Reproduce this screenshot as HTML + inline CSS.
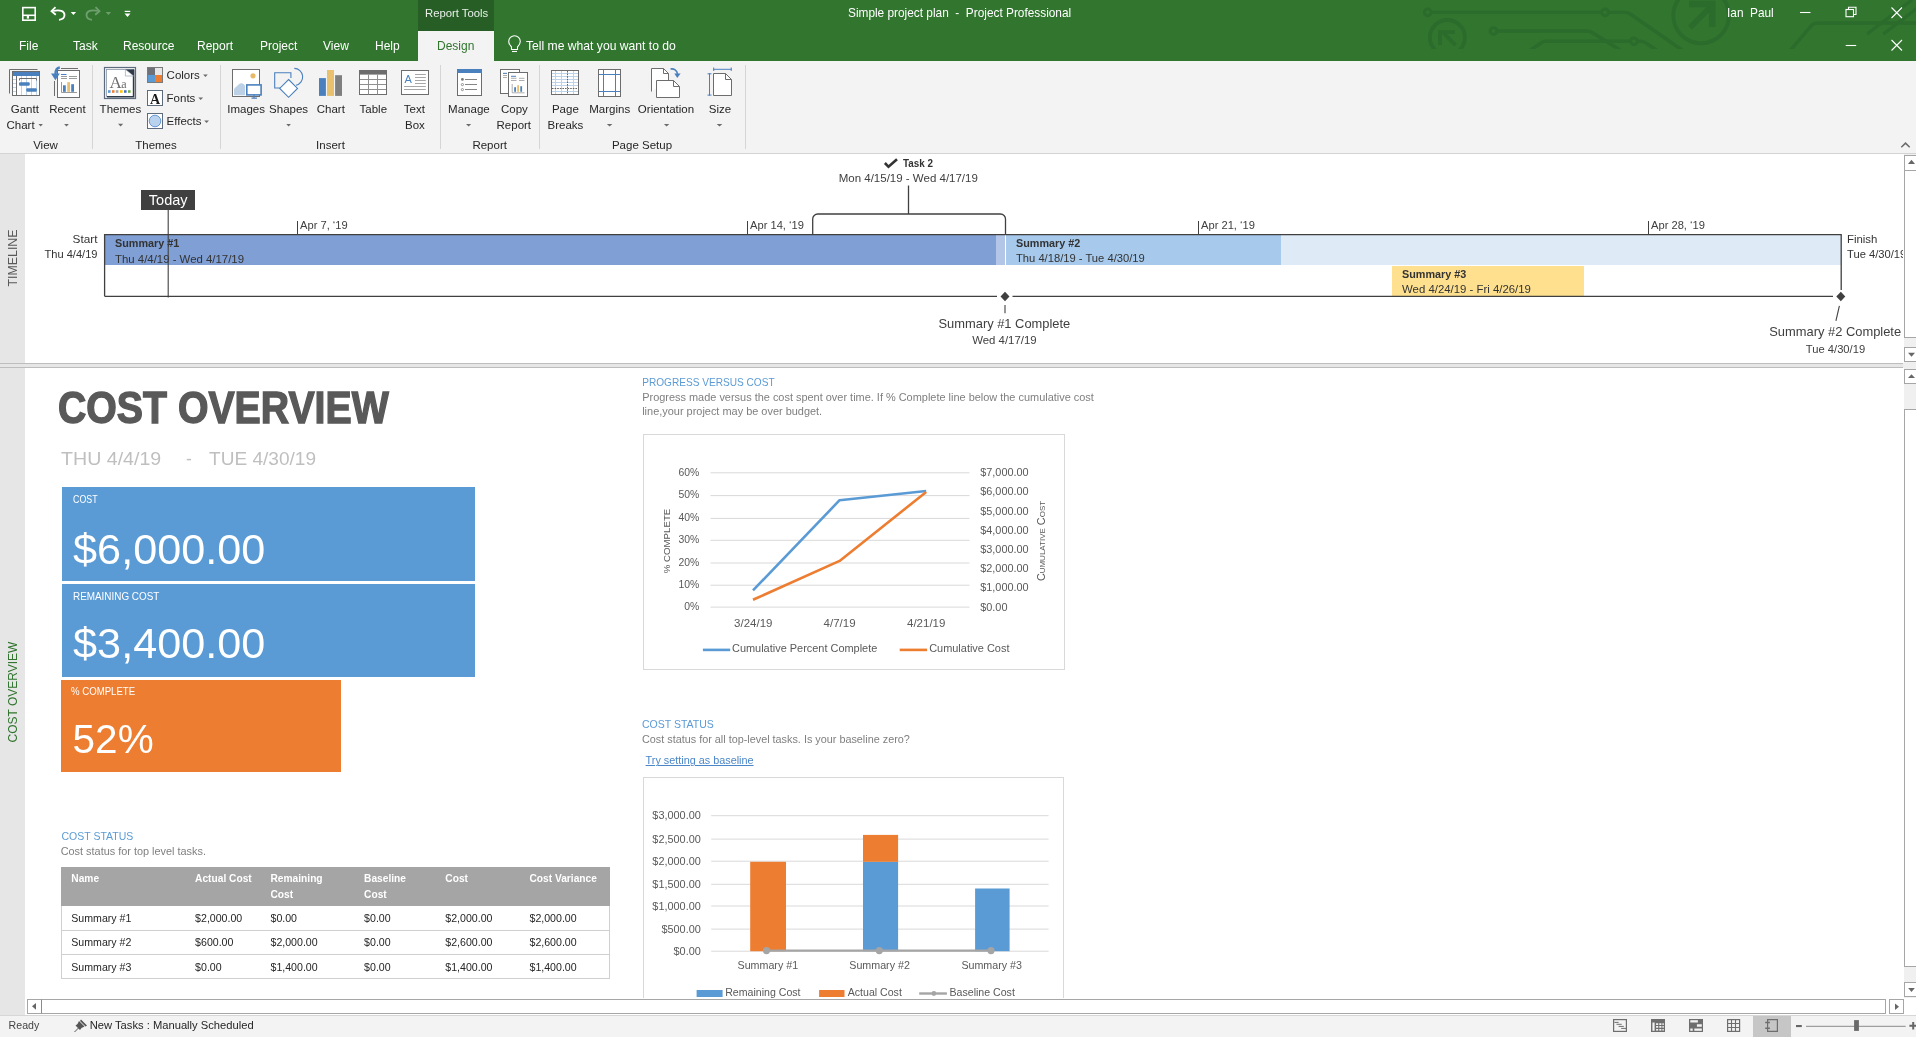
<!DOCTYPE html>
<html><head><meta charset="utf-8">
<style>
*{margin:0;padding:0;box-sizing:border-box}
html,body{width:1916px;height:1037px;overflow:hidden;background:#fff;font-family:"Liberation Sans",sans-serif;position:relative}
.a{position:absolute}
.t{position:absolute;white-space:nowrap;line-height:1;-webkit-font-smoothing:antialiased}
svg{position:absolute;overflow:visible}
</style></head><body><div id="root" style="position:absolute;left:0;top:0;width:1916px;height:1037px;overflow:hidden;will-change:transform;background:#fff">
<!-- title bar -->
<div class="a" style="left:0;top:0;width:1916px;height:61px;background:#31752f"></div>
<div class="a" style="left:418px;top:0;width:76px;height:31px;background:#265e26"></div>
<div class="a" style="left:418px;top:31px;width:76px;height:30px;background:#f3f3f3"></div>

<!-- circuit pattern -->
<svg style="left:0;top:0;overflow:hidden" width="1916" height="48.5" viewBox="0 0 1916 48.5">
<g fill="none" stroke="#2b6b2c" stroke-width="3.4">
<circle cx="1427.7" cy="12.4" r="3.3" stroke-width="3"/><circle cx="1605.1" cy="12.4" r="3.3" stroke-width="3"/>
<path d="M1431 12.4H1601.8M1608.4 12.4H1625Q1628 12.4 1631 14.5L1682 50"/>
<circle cx="1447.4" cy="37.5" r="17.5" stroke-width="3.8"/>
<path d="M1455.5 45L1443 32.5" stroke-width="3.8"/>
<path d="M1439.9 45V32.1H1455" stroke-width="3.8"/>
<circle cx="1493.5" cy="31" r="3.3" stroke-width="3"/>
<path d="M1496.8 31H1587Q1590 31 1593 33L1620 50"/>
<path d="M1530.6 50L1541 43Q1543.5 41.3 1546 41.3H1630.6M1637.2 41.3H1640Q1643 41.3 1646 43L1656.3 50"/>
<circle cx="1633.9" cy="41.3" r="3.3" stroke-width="3"/>
<circle cx="1701.1" cy="15.5" r="27.8" stroke-width="3.8"/>
<path d="M1690 27.6L1710 7.5" stroke-width="5.5"/>
<path d="M1689 4H1712.2V26.7" stroke-width="6.5"/>
<path d="M1790.5 50L1812 25Q1814 23 1817 23H1916M1867 34L1912 0M1883.4 34L1928 0"/>
</g></svg>
<!-- qat -->
<svg style="left:0;top:0" width="140" height="28">
<g fill="none" stroke="#fff" stroke-width="1.6">
<rect x="22.8" y="7.6" width="12.4" height="12.6"/>
<path d="M23 15.3H35" stroke-width="1.6"/></g><rect x="26.8" y="15.8" width="2.2" height="2.8" fill="#fff"/><g fill="none" stroke="#fff">
<path d="M53 11C60 9.2 64.5 11 64.5 15C64.5 18 62 19.5 59 19.8" stroke-width="1.8"/>
<path d="M55.5 7.2L51.5 11.2L55.8 14.8" stroke-width="1.8"/>
</g>
<path d="M70.7 11.9H76.1L73.4 14.9Z" fill="#fff"/>
<g fill="none" stroke="#fff" stroke-width="1.8" opacity="0.3">
<path d="M98 11C91 9.2 86.5 11 86.5 15C86.5 18 89 19.5 92 19.8"/>
<path d="M95.5 7.2L99.5 11.2L95.2 14.8"/>
</g>
<path d="M105.7 11.9H111.1L108.4 14.9Z" fill="#fff" opacity="0.3"/>
<rect x="124.7" y="10.8" width="5.6" height="1.2" fill="#fff"/>
<path d="M124.5 13.6H130.5L127.5 17Z" fill="#fff"/>
</svg>
<div class="t" style="left:425px;top:8px;font-size:11.3px;color:#e8efe8">Report Tools</div>
<div class="t" style="left:848px;top:8px;font-size:11.85px;color:#fff">Simple project plan&nbsp; -&nbsp; Project Professional</div>
<div class="t" style="left:1727px;top:7.5px;font-size:11.85px;color:#fff">Ian&nbsp; Paul</div>
<svg style="left:0;top:0" width="1916" height="61">
<g stroke="#fff" stroke-width="1.1" fill="none">
<path d="M1800 12.5H1810.5"/>
<rect x="1846" y="9.5" width="7.5" height="7.2"/>
<path d="M1848.5 9.5V7.3H1856V14.5H1853.5"/>
<path d="M1891.5 7.5L1902 18M1902 7.5L1891.5 18"/>
<path d="M1845.7 45.5H1856.2" />
<path d="M1891.5 40L1902 50.5M1902 40L1891.5 50.5"/>
</g></svg>
<!-- tabs -->
<div class="t" style="left:19px;top:40px;font-size:12px;color:#fff">File</div>
<div class="t" style="left:73px;top:40px;font-size:12px;color:#fff">Task</div>
<div class="t" style="left:123px;top:40px;font-size:12px;color:#fff">Resource</div>
<div class="t" style="left:197px;top:40px;font-size:12px;color:#fff">Report</div>
<div class="t" style="left:260px;top:40px;font-size:12px;color:#fff">Project</div>
<div class="t" style="left:323px;top:40px;font-size:12px;color:#fff">View</div>
<div class="t" style="left:375px;top:40px;font-size:12px;color:#fff">Help</div>
<div class="t" style="left:437px;top:40px;font-size:12px;color:#31752f">Design</div>
<svg style="left:0;top:0" width="530" height="61"><g fill="none" stroke="#fff" stroke-width="1.1">
<path d="M511.5 47C509.5 45 508.7 43.5 508.7 41.5A5.8 5.8 0 0 1 520.3 41.5C520.3 43.5 519.5 45 517.5 47V49.5H511.5Z"/>
<path d="M512 51.5H517"/></g></svg>
<div class="t" style="left:526px;top:40px;font-size:12.15px;color:#fff">Tell me what you want to do</div>

<!-- ribbon -->
<div class="a" style="left:0;top:61px;width:1916px;height:92px;background:#f3f3f3"></div>
<div class="a" style="left:0;top:153px;width:1916px;height:1px;background:#d4d4d4"></div>

<svg style="left:0;top:0" width="760" height="154" viewBox="0 0 760 154">
<g shape-rendering="crispEdges">
<!-- separators -->
<rect x="92" y="65" width="1" height="84" fill="#d5d5d5"/>
<rect x="220" y="65" width="1" height="84" fill="#d5d5d5"/>
<rect x="440" y="65" width="1" height="84" fill="#d5d5d5"/>
<rect x="539" y="65" width="1" height="84" fill="#d5d5d5"/>
<rect x="745" y="65" width="1" height="84" fill="#d5d5d5"/>
</g>
<!-- gantt -->
<path d="M9.5 93.5V69.5H37.5" fill="none" stroke="#6d6d6d" stroke-width="1"/>
<rect x="12.5" y="71.5" width="27" height="24" fill="#fff" stroke="#6d6d6d"/>
<rect x="13" y="72" width="26" height="4" fill="#4a80bd"/>
<g stroke="#bdd3ea" stroke-width="1"><path d="M21.5 76V95M26.5 76V95M31.5 76V95M36.5 76V95M13 79.5H16M13 83.5H16M13 87.5H16M13 91.5H16"/></g>
<path d="M16.5 76V95" stroke="#6d6d6d"/>
<path d="M19.5 80.5V78.5H36.5V80.5" fill="none" stroke="#6d6d6d"/>
<rect x="19" y="82.3" width="10.7" height="3.4" rx="1" fill="#4a80bd"/>
<rect x="26.3" y="88.3" width="10.5" height="3.4" rx="1" fill="#4a80bd"/>
<!-- recent -->
<path d="M61 68.5H78" stroke="#6d6d6d"/>
<rect x="57.5" y="70.5" width="22" height="27" fill="#fff" stroke="#6d6d6d"/>
<path d="M54.5 81V96" stroke="#6d6d6d"/>
<path d="M61 74.5H66.5" stroke="#4a80bd"/>
<path d="M61 76.5H67M69 76.5H77M61 78.5H67M69 78.5H77" stroke="#9a9a9a"/>
<path d="M61.5 82V92.5H77" fill="none" stroke="#9a9a9a"/>
<rect x="63" y="85.3" width="2.8" height="6.5" fill="#4a80bd"/>
<rect x="67.2" y="82.2" width="2.8" height="9.6" fill="#e8c06e"/>
<rect x="71.2" y="84.2" width="2.8" height="7.6" fill="#4a80bd"/>
<path d="M59.8 67.5C56.5 68 55.5 70.5 55.5 74V76" fill="none" stroke="#4a80bd" stroke-width="2.4"/>
<path d="M51 73.5L55.4 80.3L59.8 73.5Z" fill="#4a80bd"/>
<!-- themes -->
<rect x="104.5" y="67.5" width="31" height="31" fill="#f7f7f7" stroke="#5d6b7e" stroke-width="1.2"/>
<rect x="106.5" y="69.5" width="27" height="27" fill="#fff" stroke="#8a96a8" stroke-width="0.8"/>
<path d="M133.6 69.4V96.7H107" fill="none" stroke="#2f3a48" stroke-width="1.6"/>
<path d="M125.4 69.4H133.6V76Z" fill="#2f3a48"/>
<path d="M125.4 69.4L133.6 76H125.4Z" fill="#fff" stroke="#8a96a8" stroke-width="0.6"/>
<text x="109.5" y="87.6" font-family="Liberation Serif" font-size="17" fill="#6d6d6d">A</text>
<text x="121.3" y="87.6" font-family="Liberation Serif" font-size="12" fill="#6d6d6d">a</text>
<rect x="108" y="90.2" width="2.6" height="2.6" fill="#5b9bd5"/>
<rect x="111.9" y="90.2" width="2.6" height="2.6" fill="#ed7d31"/>
<rect x="115.8" y="90.2" width="2.6" height="2.6" fill="#a5a5a5"/>
<rect x="120" y="90.2" width="2.6" height="2.6" fill="#ffc000"/>
<rect x="124" y="90.2" width="2.6" height="2.6" fill="#4472c4"/>
<rect x="128" y="90.2" width="2.6" height="2.6" fill="#70ad47"/>
<!-- colors/fonts/effects -->
<rect x="147.5" y="67.5" width="15" height="15" fill="#888" stroke="#7a7a7a"/>
<rect x="148" y="68" width="7" height="7" fill="#6e7178"/>
<rect x="155" y="68" width="7" height="7" fill="#e7e7e7"/>
<rect x="148" y="75" width="7" height="7" fill="#5b9bd5"/>
<rect x="155" y="75" width="7" height="7" fill="#ed7d31"/>
<rect x="147.5" y="90.5" width="15" height="15" fill="#fff" stroke="#5d6b7e"/>
<text x="150" y="103.5" font-family="Liberation Serif" font-weight="bold" font-size="14" fill="#1a1a1a">A</text>
<rect x="147.5" y="113.5" width="15" height="15" fill="#fff" stroke="#5d6b7e"/>
<circle cx="155" cy="121" r="5.8" fill="#b9d3ef" stroke="#5b8fd0" stroke-width="0.9"/>
<!-- images -->
<rect x="232.5" y="69.5" width="27" height="27" fill="#fff" stroke="#6d6d6d"/>
<circle cx="253" cy="75.8" r="2.6" fill="#e9b96a"/>
<path d="M234 95.3V89C236 87 239 83.5 241 83.2C243 83 245 85 245 86V95.3Z" fill="#bcd0e6"/>
<rect x="246.8" y="84.9" width="14.3" height="10" fill="#fff" stroke="#4a80bd" stroke-width="1.6"/>
<path d="M254 95V97.5M251.5 98.2H257" stroke="#4a80bd" stroke-width="1.2"/>
<!-- shapes -->
<path d="M294.3 68.4A8.5 8.5 0 0 1 296 85.2" fill="none" stroke="#4a80bd" stroke-width="1.1"/>
<path d="M290.9 78V72.8H274.7V88H281" fill="none" stroke="#4a80bd" stroke-width="1.1"/>
<path d="M288.6 79.5L297.5 88.4L288.6 97.3L279.7 88.4Z" fill="#fff" stroke="#4a80bd" stroke-width="1.1"/>
<!-- chart -->
<rect x="319" y="78.1" width="6.9" height="17.8" fill="#4a80bd"/>
<rect x="327" y="70" width="7" height="25.9" fill="#e8c06e"/>
<rect x="335.1" y="75.2" width="6.9" height="20.7" fill="#7f7f7f"/>
<!-- table -->
<rect x="359.5" y="70.5" width="27" height="24" fill="#fff" stroke="#6d6d6d"/>
<rect x="359" y="70" width="28" height="4.6" fill="#6d6d6d"/>
<path d="M368.5 74.6V94.5M377.5 74.6V94.5M360 79.5H386M360 84.5H386M360 89.5H386" stroke="#8f8f8f"/>
<!-- text box -->
<rect x="401.5" y="70.5" width="27" height="24" fill="#fff" stroke="#6d6d6d"/>
<text x="404.6" y="82.8" font-family="Liberation Sans" font-size="11" fill="#4a80bd">A</text>
<path d="M415 74.5H425.8M415 77.5H425.8M415 80.5H425.8M415 83.5H425.8M404 86.5H425.8M404 89.5H425.8" stroke="#8f8f8f" stroke-width="0.8"/>
<!-- manage -->
<rect x="457.5" y="69.5" width="24" height="26" fill="#fff" stroke="#6d6d6d"/>
<rect x="457" y="69" width="25" height="4" fill="#4a80bd"/>
<circle cx="462.4" cy="79.4" r="1.4" fill="#777"/>
<circle cx="462.4" cy="84.6" r="1.1" fill="none" stroke="#777" stroke-width="0.8"/>
<circle cx="462.4" cy="89.6" r="1.1" fill="none" stroke="#777" stroke-width="0.8"/>
<path d="M465 79.5H477M465 84.5H477M465 89.5H477" stroke="#777" stroke-width="0.9"/>
<!-- copy report -->
<rect x="500.5" y="69.5" width="19" height="24" fill="#fff" stroke="#6d6d6d"/>
<path d="M503 73.5H507M503 75.5H507M503 77.5H507" stroke="#999" stroke-width="0.8"/>
<path d="M503 73.3H507" stroke="#4a80bd" stroke-width="0.9"/>
<rect x="508.5" y="72.5" width="19" height="24" fill="#fff" stroke="#6d6d6d"/>
<path d="M511 76.3H516" stroke="#4a80bd" stroke-width="1"/>
<path d="M511 78.3H516.5M519 78.3H524.5M511 80.5H516.5M519 80.5H524.5" stroke="#999" stroke-width="0.8"/>
<path d="M512.2 84V92.8H524.6" fill="none" stroke="#999" stroke-width="0.8"/>
<rect x="514.2" y="87.2" width="1.8" height="4.6" fill="#4a80bd"/>
<rect x="517.2" y="85.2" width="1.8" height="6.6" fill="#e8c06e"/>
<rect x="520.3" y="86.2" width="1.8" height="5.6" fill="#4a80bd"/>
<!-- page breaks -->
<rect x="551.5" y="70.5" width="27" height="24" fill="#fff" stroke="#6d6d6d"/>
<path d="M552 73.5H578M552 76.5H578M552 79.5H578M552 82.5H578M552 85.5H578M552 91.5H578M555.5 71V94M561.5 71V94M573.5 71V94" stroke="#bdd3ea" stroke-width="1"/>
<path d="M567.5 71V94M552 88.5H578" stroke="#555" stroke-width="0.9" stroke-dasharray="1.6 1"/>
<!-- margins -->
<rect x="598.5" y="69.5" width="22" height="27" fill="#fff" stroke="#6d6d6d"/>
<path d="M603.5 70V96M615.5 70V96M599 74.5H620M599 91.5H620" stroke="#4a80bd" stroke-width="1"/>
<!-- orientation -->
<path d="M651.5 91.5V68.5H663.5L668.5 73.5V80" fill="#fff" stroke="#6d6d6d"/>
<path d="M663.5 68.5V73.5H668.5" fill="none" stroke="#6d6d6d"/>
<path d="M656.5 97.5V80.5H673.5L679.5 86.5V97.5Z" fill="#fff" stroke="#6d6d6d"/>
<path d="M673.5 80.5V86.5H679.5" fill="none" stroke="#6d6d6d"/>
<path d="M670.5 69C674 68.5 677 70 677.5 74" fill="none" stroke="#4a80bd" stroke-width="1.6"/>
<path d="M674.3 73.5L677.3 78L680.6 73.5Z" fill="#4a80bd"/>
<!-- size -->
<path d="M709.5 73.3V95.6M707.5 73.8H711.5M707.5 95.1H711.5M713.2 69.3H731.7M713.7 67.5V71M731.2 67.5V71" stroke="#4a80bd" stroke-width="1"/>
<path d="M713.5 95.5V73.5H725.5L731.5 79.5V95.5Z" fill="#fff" stroke="#6d6d6d"/>
<path d="M725.5 73.5V79.5H731.5" fill="none" stroke="#6d6d6d"/>
<!-- triangles -->
<g fill="#6a6a6a">
<path d="M38.5 124.1H42.9L40.7 126.6Z"/>
<path d="M64.1 124.1H68.9L66.5 126.6Z"/>
<path d="M118 123.8H123.2L120.6 126.5Z"/>
<path d="M203.1 74.4H207.8L205.45 76.9Z"/>
<path d="M198.3 97.4H203.1L200.7 99.9Z"/>
<path d="M204.2 120.4H209L206.6 122.9Z"/>
<path d="M286.3 124.1H290.9L288.6 126.6Z"/>
<path d="M466 124.1H471.2L468.6 126.6Z"/>
<path d="M606.8 124.1H612.4L609.6 126.6Z"/>
<path d="M663.9 124.1H669.3L666.6 126.6Z"/>
<path d="M716.7 124.1H722.3L719.5 126.6Z"/>
</g>
<!-- collapse -->

</svg>
<svg style="left:1890px;top:135px" width="26" height="18"><path d="M11.3 12.3L15.5 8.1L19.7 12.3" fill="none" stroke="#6a6a6a" stroke-width="1.5"/></svg>
<div class="t" style="left:-35.2px;top:104px;width:120px;text-align:center;font-size:11.5px;color:#262626">Gantt</div>
<div class="t" style="left:6.5px;top:120px;font-size:11.5px;color:#262626">Chart</div>
<div class="t" style="left:7.400000000000006px;top:104px;width:120px;text-align:center;font-size:11.5px;color:#262626">Recent</div>
<div class="t" style="left:60.400000000000006px;top:104px;width:120px;text-align:center;font-size:11.5px;color:#262626">Themes</div>
<div class="t" style="left:166.6px;top:70px;font-size:11.5px;color:#262626">Colors</div>
<div class="t" style="left:166.6px;top:93px;font-size:11.5px;color:#262626">Fonts</div>
<div class="t" style="left:166.6px;top:116px;font-size:11.5px;color:#262626">Effects</div>
<div class="t" style="left:186.1px;top:104px;width:120px;text-align:center;font-size:11.5px;color:#262626">Images</div>
<div class="t" style="left:228.60000000000002px;top:104px;width:120px;text-align:center;font-size:11.5px;color:#262626">Shapes</div>
<div class="t" style="left:270.8px;top:104px;width:120px;text-align:center;font-size:11.5px;color:#262626">Chart</div>
<div class="t" style="left:313.3px;top:104px;width:120px;text-align:center;font-size:11.5px;color:#262626">Table</div>
<div class="t" style="left:354.4px;top:104px;width:120px;text-align:center;font-size:11.5px;color:#262626">Text</div>
<div class="t" style="left:354.9px;top:120px;width:120px;text-align:center;font-size:11.5px;color:#262626">Box</div>
<div class="t" style="left:408.9px;top:104px;width:120px;text-align:center;font-size:11.5px;color:#262626">Manage</div>
<div class="t" style="left:454.4px;top:104px;width:120px;text-align:center;font-size:11.5px;color:#262626">Copy</div>
<div class="t" style="left:453.79999999999995px;top:120px;width:120px;text-align:center;font-size:11.5px;color:#262626">Report</div>
<div class="t" style="left:505.4px;top:104px;width:120px;text-align:center;font-size:11.5px;color:#262626">Page</div>
<div class="t" style="left:505.4px;top:120px;width:120px;text-align:center;font-size:11.5px;color:#262626">Breaks</div>
<div class="t" style="left:549.7px;top:104px;width:120px;text-align:center;font-size:11.5px;color:#262626">Margins</div>
<div class="t" style="left:606.0px;top:104px;width:120px;text-align:center;font-size:11.5px;color:#262626">Orientation</div>
<div class="t" style="left:660.0px;top:104px;width:120px;text-align:center;font-size:11.5px;color:#262626">Size</div>
<div class="t" style="left:-14.5px;top:140px;width:120px;text-align:center;font-size:11.5px;color:#262626">View</div>
<div class="t" style="left:96.0px;top:140px;width:120px;text-align:center;font-size:11.5px;color:#262626">Themes</div>
<div class="t" style="left:270.5px;top:140px;width:120px;text-align:center;font-size:11.5px;color:#262626">Insert</div>
<div class="t" style="left:429.7px;top:140px;width:120px;text-align:center;font-size:11.5px;color:#262626">Report</div>
<div class="t" style="left:582.0px;top:140px;width:120px;text-align:center;font-size:11.5px;color:#262626">Page Setup</div>


<div class="a" style="left:0px;top:154px;width:25px;height:209px;background:#e6e6e6;"></div>
<div class="t" style="left:12.7px;top:258px;font-size:12.4px;color:#595959;transform:translate(-50%,-50%) rotate(-90deg);">TIMELINE</div>
<div class="a" style="left:141px;top:190px;width:54px;height:20px;background:#404040;"></div>
<div class="t" style="left:-131.80px;width:600px;text-align:center;top:192.81px;font-size:14.5px;color:#fff;">Today</div>
<div class="t" style="left:902.60px;top:157.92px;font-size:10.6px;color:#333;font-weight:bold;transform:scaleX(0.93);transform-origin:0 0;">Task 2</div>
<div class="t" style="left:608.30px;width:600px;text-align:center;top:172.70px;font-size:11.5px;color:#404040;">Mon 4/15/19 - Wed 4/17/19</div>
<div class="a" style="left:105px;top:235px;width:891px;height:30px;background:#7f9fd5;"></div>
<div class="a" style="left:996px;top:235px;width:9px;height:30px;background:#b4c6e8;"></div>
<div class="a" style="left:1006px;top:235px;width:275px;height:30px;background:#a6c9ec;"></div>
<div class="a" style="left:1281px;top:235px;width:560px;height:30px;background:#deeaf6;"></div>
<div class="a" style="left:1392px;top:266px;width:192px;height:30px;background:#ffe08f;"></div>
<div class="t" style="left:115.00px;top:238.09px;font-size:10.8px;color:#333;font-weight:bold;">Summary #1</div>
<div class="t" style="left:115.00px;top:253.51px;font-size:11.4px;color:#333;">Thu 4/4/19 - Wed 4/17/19</div>
<div class="t" style="left:1016.00px;top:237.79px;font-size:10.8px;color:#333;font-weight:bold;">Summary #2</div>
<div class="t" style="left:1016.00px;top:253.34px;font-size:11.2px;color:#333;">Thu 4/18/19 - Tue 4/30/19</div>
<div class="t" style="left:1402.00px;top:268.59px;font-size:10.8px;color:#333;font-weight:bold;">Summary #3</div>
<div class="t" style="left:1402.00px;top:284.41px;font-size:11.4px;color:#333;">Wed 4/24/19 - Fri 4/26/19</div>
<div class="t" style="left:-502.50px;width:600px;text-align:right;top:233.76px;font-size:11.8px;color:#333;">Start</div>
<div class="t" style="left:-502.50px;width:600px;text-align:right;top:248.55px;font-size:11.1px;color:#333;">Thu 4/4/19</div>
<div class="t" style="left:1847.00px;top:234.21px;font-size:11.4px;color:#333;">Finish</div>
<div class="a" style="left:1847px;top:247px;width:56px;height:16px;overflow:hidden">
<div class="t" style="left:0.00px;top:2.34px;font-size:11.2px;color:#333;">Tue 4/30/19</div>
</div>
<div class="a" style="left:297px;top:221px;width:1px;height:13px;background:#404040;"></div>
<div class="t" style="left:300.00px;top:219.54px;font-size:11.15px;color:#404040;">Apr 7, &#8216;19</div>
<div class="a" style="left:747px;top:221px;width:1px;height:13px;background:#404040;"></div>
<div class="t" style="left:750.00px;top:219.54px;font-size:11.15px;color:#404040;">Apr 14, &#8216;19</div>
<div class="a" style="left:1198px;top:221px;width:1px;height:13px;background:#404040;"></div>
<div class="t" style="left:1201.00px;top:219.54px;font-size:11.15px;color:#404040;">Apr 21, &#8216;19</div>
<div class="a" style="left:1648px;top:221px;width:1px;height:13px;background:#404040;"></div>
<div class="t" style="left:1651.00px;top:219.54px;font-size:11.15px;color:#404040;">Apr 28, &#8216;19</div>
<div class="t" style="left:704.40px;width:600px;text-align:center;top:318.32px;font-size:12.9px;color:#404040;">Summary #1 Complete</div>
<div class="t" style="left:704.40px;width:600px;text-align:center;top:335.21px;font-size:11.4px;color:#404040;">Wed 4/17/19</div>
<div class="t" style="left:1535.20px;width:600px;text-align:center;top:326.12px;font-size:12.9px;color:#404040;">Summary #2 Complete</div>
<div class="t" style="left:1535.50px;width:600px;text-align:center;top:343.54px;font-size:11.2px;color:#404040;">Tue 4/30/19</div>
<svg style="left:0;top:150px" width="1916" height="215" viewBox="0 150 1916 215">
<g fill="none" stroke="#404040" stroke-width="1.3">
<path d="M104.6 296.3V234.6H1841.2V290"/>
<path d="M104.6 296.3H997M1012.5 296.3H1833"/>
<path d="M908.5 185.5V214"/>
<path d="M812.7 234V219A5 5 0 0 1 817.7 214H1000.5A5 5 0 0 1 1005.5 219V234"/>
</g>
<g stroke="#404040" stroke-width="1.1"><path d="M168.2 210V297.5"/><path d="M1005 305V313.3"/><path d="M1839.4 305.8L1835.9 320.9"/></g>
<path d="M1005 291.8L1009.5 296.5L1005 301.2L1000.5 296.5Z" fill="#404040"/>
<path d="M1840.8 291.8L1845.3 296.5L1840.8 301.2L1836.3 296.5Z" fill="#404040"/>
<path d="M884.9 163L888.5 166.8L897 159.3" fill="none" stroke="#333" stroke-width="2.6"/>
</svg>
<div class="a" style="left:1904px;top:154px;width:12px;height:209px;background:#f0f0f0;"></div>
<div class="a" style="left:1904px;top:155px;width:13px;height:183px;background:#fff;border:1px solid #a6a6a6"></div>
<div class="a" style="left:1904px;top:155px;width:13px;height:16px;background:#fff;border:1px solid #a6a6a6"></div>
<div class="a" style="left:1904px;top:347px;width:13px;height:15px;background:#fff;border:1px solid #a6a6a6"></div>
<svg style="left:1900px;top:150px" width="16" height="215" viewBox="1900 150 16 215"><path d="M1908 164H1915L1911.5 159.8Z" fill="#666"/><path d="M1908 352.8H1915L1911.5 356.8Z" fill="#666"/></svg>
<div class="a" style="left:0px;top:363px;width:1916px;height:5px;background:#e6e6e6;border-top:1px solid #bdbdbd;border-bottom:1px solid #bdbdbd;"></div>
<div class="a" style="left:1903px;top:363px;width:13px;height:5px;background:#efefef;"></div>
<div class="a" style="left:0px;top:368px;width:25px;height:647px;background:#e6e6e6;"></div>
<div class="t" style="left:13.2px;top:691.5px;font-size:12px;color:#31752f;transform:translate(-50%,-50%) rotate(-90deg);">COST OVERVIEW</div>
<div class="t" style="left:58.20px;transform-origin:0 0;top:385.83px;font-size:44.2px;color:#595959;font-weight:bold;transform:scaleX(0.888);-webkit-text-stroke:1.4px #595959;">COST OVERVIEW</div>
<div class="t" style="left:60.70px;transform-origin:0 0;top:450.72px;font-size:17.5px;color:#bfbfbf;transform:scaleX(1.12);">THU 4/4/19</div>
<div class="t" style="left:186.00px;transform-origin:0 0;top:450.72px;font-size:17.5px;color:#bfbfbf;">-</div>
<div class="t" style="left:209.10px;transform-origin:0 0;top:450.72px;font-size:17.5px;color:#bfbfbf;transform:scaleX(1.09);">TUE 4/30/19</div>
<div class="a" style="left:62px;top:487px;width:413px;height:94px;background:#5b9bd5;"></div>
<div class="a" style="left:62px;top:584px;width:413px;height:93px;background:#5b9bd5;"></div>
<div class="a" style="left:61px;top:680px;width:280px;height:92px;background:#ed7d31;"></div>
<div class="t" style="left:72.60px;transform-origin:0 0;top:493.54px;font-size:11.2px;color:#fff;transform:scaleX(0.79);">COST</div>
<div class="t" style="left:72.60px;transform-origin:0 0;top:590.54px;font-size:11.2px;color:#fff;transform:scaleX(0.885);">REMAINING COST</div>
<div class="t" style="left:71.10px;transform-origin:0 0;top:686.24px;font-size:11.2px;color:#fff;transform:scaleX(0.86);">% COMPLETE</div>
<div class="t" style="left:73.10px;transform-origin:0 0;top:527.86px;font-size:43.2px;color:#fff;">$6,000.00</div>
<div class="t" style="left:73.10px;transform-origin:0 0;top:621.86px;font-size:43.2px;color:#fff;">$3,400.00</div>
<div class="t" style="left:72.60px;transform-origin:0 0;top:719.11px;font-size:40.5px;color:#fff;">52%</div>
<div class="t" style="left:61.50px;transform-origin:0 0;top:830.93px;font-size:10.5px;color:#5b9bd5;">COST STATUS</div>
<div class="t" style="left:60.70px;transform-origin:0 0;top:845.58px;font-size:10.9px;color:#7f7f7f;">Cost status for top level tasks.</div>
<div class="a" style="left:61px;top:867px;width:549px;height:39px;background:#a5a5a5;"></div>
<div class="a" style="left:61px;top:906px;width:549px;height:73px;border:1px solid #d0d0d0;border-top:none;background:#fff"></div>
<div class="a" style="left:62px;top:930px;width:547px;height:1px;background:#d0d0d0;"></div>
<div class="a" style="left:62px;top:954px;width:547px;height:1px;background:#d0d0d0;"></div>
<div class="t" style="left:71.30px;transform-origin:0 0;top:874.27px;font-size:10.2px;color:#fff;font-weight:bold;">Name</div>
<div class="t" style="left:195.10px;transform-origin:0 0;top:874.27px;font-size:10.2px;color:#fff;font-weight:bold;">Actual Cost</div>
<div class="t" style="left:270.50px;transform-origin:0 0;top:874.27px;font-size:10.2px;color:#fff;font-weight:bold;">Remaining</div>
<div class="t" style="left:270.50px;transform-origin:0 0;top:889.57px;font-size:10.2px;color:#fff;font-weight:bold;">Cost</div>
<div class="t" style="left:364.10px;transform-origin:0 0;top:874.27px;font-size:10.2px;color:#fff;font-weight:bold;">Baseline</div>
<div class="t" style="left:364.10px;transform-origin:0 0;top:889.57px;font-size:10.2px;color:#fff;font-weight:bold;">Cost</div>
<div class="t" style="left:445.30px;transform-origin:0 0;top:874.27px;font-size:10.2px;color:#fff;font-weight:bold;">Cost</div>
<div class="t" style="left:529.50px;transform-origin:0 0;top:874.27px;font-size:10.2px;color:#fff;font-weight:bold;">Cost Variance</div>
<div class="t" style="left:71.30px;transform-origin:0 0;top:913.12px;font-size:10.6px;color:#262626;">Summary #1</div>
<div class="t" style="left:195.10px;transform-origin:0 0;top:913.12px;font-size:10.6px;color:#262626;">$2,000.00</div>
<div class="t" style="left:270.50px;transform-origin:0 0;top:913.12px;font-size:10.6px;color:#262626;">$0.00</div>
<div class="t" style="left:364.10px;transform-origin:0 0;top:913.12px;font-size:10.6px;color:#262626;">$0.00</div>
<div class="t" style="left:445.30px;transform-origin:0 0;top:913.12px;font-size:10.6px;color:#262626;">$2,000.00</div>
<div class="t" style="left:529.50px;transform-origin:0 0;top:913.12px;font-size:10.6px;color:#262626;">$2,000.00</div>
<div class="t" style="left:71.30px;transform-origin:0 0;top:937.22px;font-size:10.6px;color:#262626;">Summary #2</div>
<div class="t" style="left:195.10px;transform-origin:0 0;top:937.22px;font-size:10.6px;color:#262626;">$600.00</div>
<div class="t" style="left:270.50px;transform-origin:0 0;top:937.22px;font-size:10.6px;color:#262626;">$2,000.00</div>
<div class="t" style="left:364.10px;transform-origin:0 0;top:937.22px;font-size:10.6px;color:#262626;">$0.00</div>
<div class="t" style="left:445.30px;transform-origin:0 0;top:937.22px;font-size:10.6px;color:#262626;">$2,600.00</div>
<div class="t" style="left:529.50px;transform-origin:0 0;top:937.22px;font-size:10.6px;color:#262626;">$2,600.00</div>
<div class="t" style="left:71.30px;transform-origin:0 0;top:962.12px;font-size:10.6px;color:#262626;">Summary #3</div>
<div class="t" style="left:195.10px;transform-origin:0 0;top:962.12px;font-size:10.6px;color:#262626;">$0.00</div>
<div class="t" style="left:270.50px;transform-origin:0 0;top:962.12px;font-size:10.6px;color:#262626;">$1,400.00</div>
<div class="t" style="left:364.10px;transform-origin:0 0;top:962.12px;font-size:10.6px;color:#262626;">$0.00</div>
<div class="t" style="left:445.30px;transform-origin:0 0;top:962.12px;font-size:10.6px;color:#262626;">$1,400.00</div>
<div class="t" style="left:529.50px;transform-origin:0 0;top:962.12px;font-size:10.6px;color:#262626;">$1,400.00</div>
<div class="t" style="left:642.20px;transform-origin:0 0;top:377.98px;font-size:10.1px;color:#5b9bd5;">PROGRESS VERSUS COST</div>
<div class="t" style="left:642.20px;transform-origin:0 0;top:392.17px;font-size:10.95px;color:#7f7f7f;">Progress made versus the cost spent over time. If % Complete line below the cumulative cost</div>
<div class="t" style="left:642.20px;transform-origin:0 0;top:406.07px;font-size:10.95px;color:#7f7f7f;">line,your project may be over budget.</div>
<div class="a" style="left:643px;top:434px;width:422px;height:236px;border:1px solid #d9d9d9"></div>
<svg style="left:0;top:0" width="1916" height="1037" viewBox="0 0 1916 1037">
<rect x="710.5" y="472.3" width="259" height="1" fill="#d9d9d9"/>
<rect x="710.5" y="495.1" width="259" height="1" fill="#d9d9d9"/>
<rect x="710.5" y="517.9" width="259" height="1" fill="#d9d9d9"/>
<rect x="710.5" y="539.8" width="259" height="1" fill="#d9d9d9"/>
<rect x="710.5" y="562.5" width="259" height="1" fill="#d9d9d9"/>
<rect x="710.5" y="584.7" width="259" height="1" fill="#d9d9d9"/>
<rect x="710.5" y="606.6" width="259" height="1" fill="#d9d9d9"/>
<polyline points="753,590.4 839.6,500.2 926.2,491" fill="none" stroke="#5b9bd5" stroke-width="2.6" stroke-linejoin="round"/>
<polyline points="753,599.8 839.6,560.9 926.2,492" fill="none" stroke="#ed7d31" stroke-width="2.6" stroke-linejoin="round"/>
<rect x="702.9" y="648.6" width="27.3" height="2.6" fill="#5b9bd5"/>
<rect x="899.7" y="648.6" width="27.4" height="2.6" fill="#ed7d31"/>
<rect x="711.2" y="815.2" width="337.4" height="1" fill="#d9d9d9"/>
<rect x="711.2" y="838.6" width="337.4" height="1" fill="#d9d9d9"/>
<rect x="711.2" y="860.7" width="337.4" height="1" fill="#d9d9d9"/>
<rect x="711.2" y="883.8" width="337.4" height="1" fill="#d9d9d9"/>
<rect x="711.2" y="905.5" width="337.4" height="1" fill="#d9d9d9"/>
<rect x="711.2" y="928.6" width="337.4" height="1" fill="#d9d9d9"/>
<rect x="711.2" y="950.7" width="337.4" height="1" fill="#d9d9d9"/>
<rect x="750.2" y="861.8" width="35.8" height="89.4" fill="#ed7d31"/>
<rect x="863" y="861.8" width="35.1" height="89.4" fill="#5b9bd5"/>
<rect x="863" y="834.9" width="35.1" height="26.9" fill="#ed7d31"/>
<rect x="975.1" y="888.5" width="34.5" height="62.7" fill="#5b9bd5"/>
<path d="M766.5 950.6H990.7" stroke="#a5a5a5" stroke-width="2.2"/>
<circle cx="766.5" cy="950.6" r="3.6" fill="#a5a5a5"/>
<circle cx="879.3" cy="950.6" r="3.6" fill="#a5a5a5"/>
<circle cx="991" cy="950.6" r="3.6" fill="#a5a5a5"/>
</svg>
<div class="t" style="left:99.30px;width:600px;text-align:right;transform-origin:100% 0;top:467.64px;font-size:10.4px;color:#595959;">60%</div>
<div class="t" style="left:99.30px;width:600px;text-align:right;transform-origin:100% 0;top:490.44px;font-size:10.4px;color:#595959;">50%</div>
<div class="t" style="left:99.30px;width:600px;text-align:right;transform-origin:100% 0;top:513.24px;font-size:10.4px;color:#595959;">40%</div>
<div class="t" style="left:99.30px;width:600px;text-align:right;transform-origin:100% 0;top:535.14px;font-size:10.4px;color:#595959;">30%</div>
<div class="t" style="left:99.30px;width:600px;text-align:right;transform-origin:100% 0;top:557.84px;font-size:10.4px;color:#595959;">20%</div>
<div class="t" style="left:99.30px;width:600px;text-align:right;transform-origin:100% 0;top:580.04px;font-size:10.4px;color:#595959;">10%</div>
<div class="t" style="left:99.30px;width:600px;text-align:right;transform-origin:100% 0;top:601.94px;font-size:10.4px;color:#595959;">0%</div>
<div class="t" style="left:980.20px;transform-origin:0 0;top:466.78px;font-size:10.9px;color:#595959;">$7,000.00</div>
<div class="t" style="left:980.20px;transform-origin:0 0;top:486.48px;font-size:10.9px;color:#595959;">$6,000.00</div>
<div class="t" style="left:980.20px;transform-origin:0 0;top:505.58px;font-size:10.9px;color:#595959;">$5,000.00</div>
<div class="t" style="left:980.20px;transform-origin:0 0;top:524.78px;font-size:10.9px;color:#595959;">$4,000.00</div>
<div class="t" style="left:980.20px;transform-origin:0 0;top:543.78px;font-size:10.9px;color:#595959;">$3,000.00</div>
<div class="t" style="left:980.20px;transform-origin:0 0;top:563.28px;font-size:10.9px;color:#595959;">$2,000.00</div>
<div class="t" style="left:980.20px;transform-origin:0 0;top:582.48px;font-size:10.9px;color:#595959;">$1,000.00</div>
<div class="t" style="left:980.20px;transform-origin:0 0;top:601.88px;font-size:10.9px;color:#595959;">$0.00</div>
<div class="t" style="left:667px;top:541.2px;font-size:9.7px;color:#595959;transform:translate(-50%,-50%) rotate(-90deg);">% COMPLETE</div>
<div class="t" style="left:1040.5px;top:540.5px;font-size:10.8px;color:#595959;transform:translate(-50%,-50%) rotate(-90deg);font-variant:small-caps">Cumulative Cost</div>
<div class="t" style="left:453.30px;width:600px;text-align:center;transform-origin:50% 0;top:617.90px;font-size:11.5px;color:#595959;">3/24/19</div>
<div class="t" style="left:539.60px;width:600px;text-align:center;transform-origin:50% 0;top:617.90px;font-size:11.5px;color:#595959;">4/7/19</div>
<div class="t" style="left:626.20px;width:600px;text-align:center;transform-origin:50% 0;top:617.90px;font-size:11.5px;color:#595959;">4/21/19</div>
<div class="t" style="left:732.00px;transform-origin:0 0;top:643.07px;font-size:10.95px;color:#595959;">Cumulative Percent Complete</div>
<div class="t" style="left:929.20px;transform-origin:0 0;top:643.07px;font-size:10.95px;color:#595959;">Cumulative Cost</div>
<div class="t" style="left:642.00px;transform-origin:0 0;top:718.73px;font-size:10.5px;color:#5b9bd5;">COST STATUS</div>
<div class="t" style="left:642.00px;transform-origin:0 0;top:734.29px;font-size:10.84px;color:#7f7f7f;">Cost status for all top-level tasks. Is your baseline zero?</div>
<div class="t" style="left:645.60px;transform-origin:0 0;top:755.49px;font-size:10.84px;color:#4a86c8;text-decoration:underline;">Try setting as baseline</div>
<div class="a" style="left:643px;top:777px;width:421px;height:240px;border:1px solid #d9d9d9"></div>
<div class="t" style="left:100.80px;width:600px;text-align:right;transform-origin:100% 0;top:810.48px;font-size:10.9px;color:#595959;">$3,000.00</div>
<div class="t" style="left:100.80px;width:600px;text-align:right;transform-origin:100% 0;top:833.88px;font-size:10.9px;color:#595959;">$2,500.00</div>
<div class="t" style="left:100.80px;width:600px;text-align:right;transform-origin:100% 0;top:855.98px;font-size:10.9px;color:#595959;">$2,000.00</div>
<div class="t" style="left:100.80px;width:600px;text-align:right;transform-origin:100% 0;top:879.08px;font-size:10.9px;color:#595959;">$1,500.00</div>
<div class="t" style="left:100.80px;width:600px;text-align:right;transform-origin:100% 0;top:900.78px;font-size:10.9px;color:#595959;">$1,000.00</div>
<div class="t" style="left:100.80px;width:600px;text-align:right;transform-origin:100% 0;top:923.88px;font-size:10.9px;color:#595959;">$500.00</div>
<div class="t" style="left:100.80px;width:600px;text-align:right;transform-origin:100% 0;top:945.98px;font-size:10.9px;color:#595959;">$0.00</div>
<div class="t" style="left:467.80px;width:600px;text-align:center;transform-origin:50% 0;top:960.20px;font-size:10.7px;color:#595959;">Summary #1</div>
<div class="t" style="left:579.60px;width:600px;text-align:center;transform-origin:50% 0;top:960.20px;font-size:10.7px;color:#595959;">Summary #2</div>
<div class="t" style="left:691.70px;width:600px;text-align:center;transform-origin:50% 0;top:960.20px;font-size:10.7px;color:#595959;">Summary #3</div>
<svg style="left:0;top:0" width="1916" height="1037" viewBox="0 0 1916 1037"><rect x="696.6" y="990" width="26" height="7" fill="#5b9bd5"/><rect x="819.1" y="990" width="25.4" height="7" fill="#ed7d31"/><path d="M919.2 993.5H946.9" stroke="#a5a5a5" stroke-width="2.4"/><circle cx="933.9" cy="993.5" r="2.4" fill="#a5a5a5"/></svg>
<div class="t" style="left:725.20px;transform-origin:0 0;top:987.22px;font-size:10.6px;color:#595959;">Remaining Cost</div>
<div class="t" style="left:847.70px;transform-origin:0 0;top:987.22px;font-size:10.6px;color:#595959;">Actual Cost</div>
<div class="t" style="left:949.50px;transform-origin:0 0;top:987.22px;font-size:10.6px;color:#595959;">Baseline Cost</div>
<div class="a" style="left:1904px;top:368px;width:12px;height:631px;background:#f0f0f0;"></div>
<div class="a" style="left:1904px;top:369px;width:13px;height:15px;background:#fff;border:1px solid #a6a6a6"></div>
<div class="a" style="left:1904px;top:409px;width:13px;height:558px;background:#fff;border:1px solid #a6a6a6"></div>
<div class="a" style="left:1904px;top:982px;width:13px;height:15px;background:#fff;border:1px solid #a6a6a6"></div>
<svg style="left:0;top:0" width="1916" height="1037" viewBox="0 0 1916 1037"><path d="M1908 378H1915L1911.5 374.2Z" fill="#666"/><path d="M1908.2 988H1914.8L1911.5 992Z" fill="#666"/></svg>
<div class="a" style="left:25px;top:998px;width:1891px;height:17px;background:#ffffff;"></div>
<div class="a" style="left:27px;top:999px;width:15px;height:15px;background:#fff;border:1px solid #a6a6a6"></div>
<div class="a" style="left:41px;top:999px;width:1845px;height:15px;background:#fff;border:1px solid #a6a6a6;border-left:1.5px solid #8a8a8a"></div>
<div class="a" style="left:1889px;top:999px;width:15px;height:15px;background:#fff;border:1px solid #a6a6a6"></div>
<svg style="left:0;top:0" width="1916" height="1037" viewBox="0 0 1916 1037"><path d="M36 1002.9V1009.8L32 1006.35Z" fill="#666"/><path d="M1895 1003.4V1009.9L1899 1006.65Z" fill="#666"/></svg>
<div class="a" style="left:0px;top:1015px;width:1916px;height:22px;background:#f3f3f3;"></div>
<div class="a" style="left:0px;top:1015px;width:1916px;height:1px;background:#d6d6d6;"></div>
<div class="t" style="left:8.60px;transform-origin:0 0;top:1020.12px;font-size:10.6px;color:#444;">Ready</div>
<div class="t" style="left:89.70px;transform-origin:0 0;top:1020.04px;font-size:11.2px;color:#262626;">New Tasks : Manually Scheduled</div>
<div class="a" style="left:1753px;top:1016px;width:38px;height:21px;background:#c6c6c6;"></div>
<svg style="left:0;top:0" width="1916" height="1037" viewBox="0 0 1916 1037">
<path d="M74.5 1032L79 1027.5" stroke="#555" stroke-width="1"/>
<path d="M79.5 1021.5L84.5 1026.5L81.5 1028L80 1030L75.5 1025.5L77.5 1024L79 1021Z M81 1019.5L87 1025.5L85.5 1026.5L80 1021Z" fill="#555"/>
<g fill="none" stroke="#6e6e6e" stroke-width="1.2">
<rect x="1613.6" y="1019.6" width="12.8" height="11.8"/>
<path d="M1614.4 1022.4H1618.6M1616.5 1024.3H1621.7M1618.6 1026.4H1623.8M1621.2 1028.4H1626.4" stroke-width="1"/>
<rect x="1651.6" y="1019.6" width="12.8" height="11.8"/>
<rect x="1689.6" y="1019.6" width="12.8" height="11.8"/>
<rect x="1727.6" y="1019.6" width="12" height="11.8"/>
<path d="M1731.5 1020V1031M1735.5 1020V1031M1728 1023.5H1739M1728 1027.5H1739" stroke-width="1.1"/>
<path d="M1767.6 1019.6H1777.4V1031.4H1767.6Z"/>
<path d="M1765.2 1022.6H1769.9M1765.2 1028.2H1769.9" stroke-width="1.5"/>
<path d="M1806 1026.3H1905.7" stroke="#8a8a8a" stroke-width="1"/>
</g>
<path d="M1652 1020H1664.5V1031H1652ZM1652.3 1022.6V1031H1654.6V1022.6ZM1656.1 1023.2V1025H1658.2V1023.2ZM1659.3 1023.2V1025H1661.4V1023.2ZM1662.4 1023.2V1025H1664.4V1023.2ZM1656.1 1026V1027.8H1658.2V1026ZM1659.3 1026V1027.8H1661.4V1026ZM1662.4 1026V1027.8H1664.4V1026ZM1656.1 1028.9V1030.7H1658.2V1028.9ZM1659.3 1028.9V1030.7H1661.4V1028.9ZM1662.4 1028.9V1030.7H1664.4V1028.9Z" fill="#6e6e6e" fill-rule="evenodd"/>
<path d="M1690 1020H1702.5V1031H1690ZM1690.1 1020.1V1022.6H1697.9V1020.1ZM1696.9 1024.3V1026.8H1702.1V1024.3ZM1690.1 1028.4V1031H1692.7V1028.4ZM1694.3 1028.4V1031H1702.1V1028.4Z" fill="#6e6e6e" fill-rule="evenodd"/>
<rect x="1796" y="1025" width="5.8" height="2.1" fill="#666"/>
<rect x="1854.1" y="1020.1" width="4.8" height="10.8" fill="#6a6a6a"/>
<path d="M1909.4 1025.7H1917M1913.2 1022V1029.4" stroke="#666" stroke-width="2"/>
</svg>
</div></body></html>
